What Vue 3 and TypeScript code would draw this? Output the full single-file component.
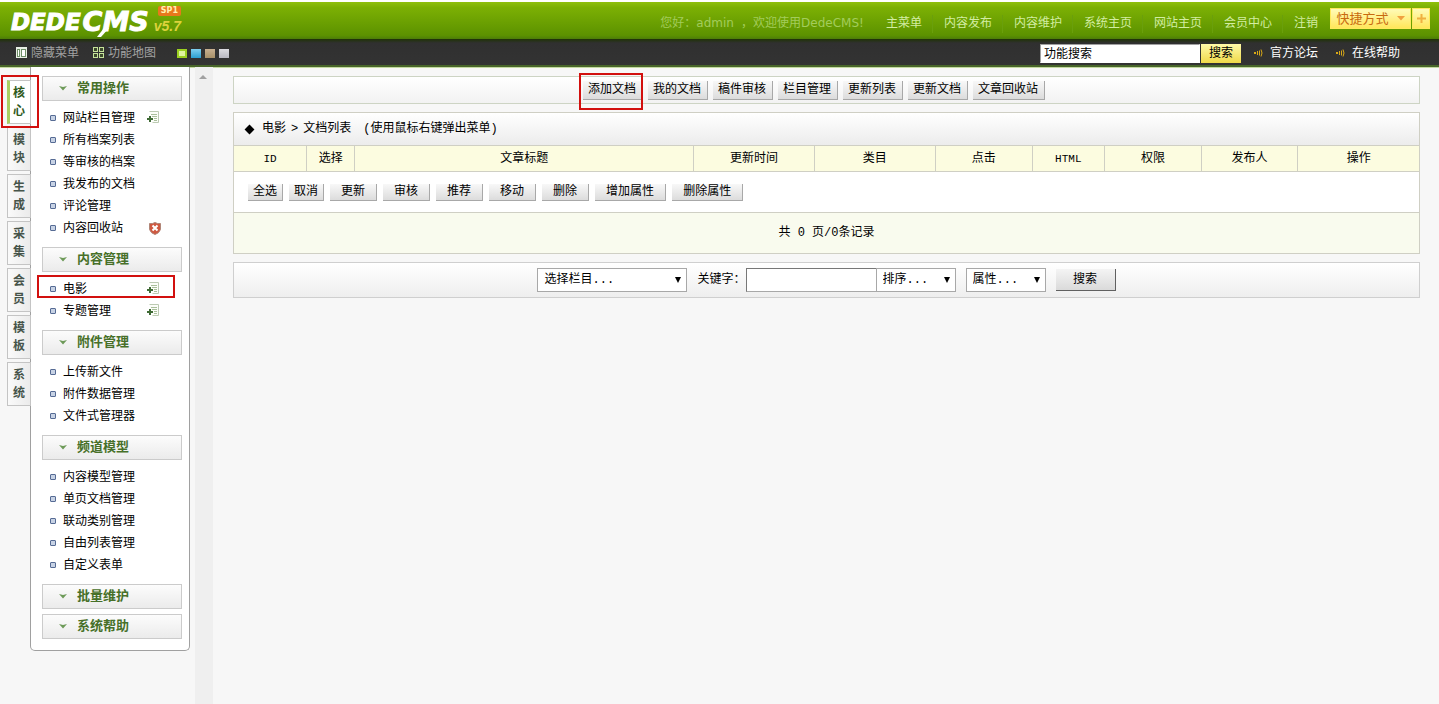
<script setup lang="ts">
import { ref } from 'vue'

interface MenuItem { text: string; icon?: 'add' | 'trash'; marked?: boolean }
interface MenuGroup { title: string; items: MenuItem[] }

const topLinks: string[] = ['主菜单', '内容发布', '内容维护', '系统主页', '网站主页', '会员中心', '注销']
const skins: string[] = ['lime', 'blue', 'tan', 'grey']
const tabs: string[] = ['核心', '模块', '生成', '采集', '会员', '模板', '系统']
const activeTab = ref('核心')

const groups: MenuGroup[] = [
  {
    title: '常用操作',
    items: [
      { text: '网站栏目管理', icon: 'add' },
      { text: '所有档案列表' },
      { text: '等审核的档案' },
      { text: '我发布的文档' },
      { text: '评论管理' },
      { text: '内容回收站', icon: 'trash' },
    ],
  },
  { title: '内容管理', items: [{ text: '电影', icon: 'add', marked: true }, { text: '专题管理', icon: 'add' }] },
  { title: '附件管理', items: [{ text: '上传新文件' }, { text: '附件数据管理' }, { text: '文件式管理器' }] },
  {
    title: '频道模型',
    items: [
      { text: '内容模型管理' },
      { text: '单页文档管理' },
      { text: '联动类别管理' },
      { text: '自由列表管理' },
      { text: '自定义表单' },
    ],
  },
  { title: '批量维护', items: [] },
  { title: '系统帮助', items: [] },
]

const tools: string[] = ['添加文档', '我的文档', '稿件审核', '栏目管理', '更新列表', '更新文档', '文章回收站']
const columns: string[] = ['ID', '选择', '文章标题', '更新时间', '类目', '点击', 'HTML', '权限', '发布人', '操作']
const actions: string[] = ['全选', '取消', '更新', '审核', '推荐', '移动', '删除', '增加属性', '删除属性']
const feature = ref('功能搜索')
const keyword = ref('')
</script>

<template>
  <div class="page">
    <header>
      <div class="green">
        <a class="logo" href="#" aria-label="DEDECMS v5.7 SP1">
          <span class="dede">DEDE</span><span class="cms">CMS</span>
          <svg class="tail" width="12" height="9" viewBox="0 0 12 9"><path d="M7 0h5L4 9H0z" fill="#fff" /></svg>
          <span class="version"><span class="sp">SP1</span><span class="num">v5.7</span></span>
        </a>
        <p class="hello">您好：<span class="verdana">admin</span> ，欢迎使用<span class="verdana">DedeCMS!</span></p>
        <nav class="top-links">
          <a v-for="l in topLinks" :key="l" href="#">{{ l }}</a>
        </nav>
        <div class="shortcut">
          <button class="short-main"><span>快捷方式</span>
            <svg width="8" height="5" viewBox="0 0 8 5"><path d="M0 0h8L4 4.5z" fill="#f0a040" /></svg>
          </button>
          <button class="short-add" aria-label="添加快捷方式">
            <svg width="9" height="9" viewBox="0 0 9 9"><path d="M3.500 0h2v3.500H9v2H5.500V9h-2V5.500H0v-2h3.500z" fill="#f0b040" /></svg>
          </button>
        </div>
      </div>
      <div class="dark">
        <a class="tool" href="#">
          <svg width="11" height="11" viewBox="0 0 11 11"><path d="M0 0h11v11H0z" fill="#e8efe4" /><path d="M1 2h3v8H1zM5 2h5v8H5z" fill="#6f8f68" /><path d="M2 3h1v6H2zM6 3h3v6H6z" fill="#fff" /></svg>
          <span>隐藏菜单</span>
        </a>
        <a class="tool map" href="#">
          <svg width="11" height="11" viewBox="0 0 11 11"><path d="M0 0h5v5H0zM6 0h5v5H6zM0 6h5v5H0zM6 6h5v5H6z" fill="#c5e29a" /><path d="M1 1h3v3H1zM7 1h3v3H7zM1 7h3v3H1zM7 7h3v3H7z" fill="#3c4a2c" /></svg>
          <span>功能地图</span>
        </a>
        <div class="skins">
          <button v-for="s in skins" :key="s" :class="['skin', s]" :aria-label="s"></button>
        </div>
        <form class="feature" @submit.prevent>
          <input v-model="feature" type="text" aria-label="功能搜索" />
          <button>搜索</button>
        </form>
        <a v-for="h in ['官方论坛', '在线帮助']" :key="h" class="help" href="#">
          <svg width="10" height="8" viewBox="0 0 10 8"><path d="M0 3h2v2H0z" fill="#d8a818" /><path d="M3.500 2v4M5.500 1.500v5M7 .5q2 3.500 0 7" fill="none" stroke="#d8a818" /></svg>
          <span>{{ h }}</span>
        </a>
      </div>
    </header>

    <div class="body">
      <nav class="tabs">
        <button v-for="t in tabs" :key="t" :class="['tab', { on: t === activeTab }]" @click="activeTab = t">{{ t }}</button>
      </nav>
      <aside class="menu">
        <section v-for="g in groups" :key="g.title" :class="{ closed: !g.items.length }">
          <h2>
            <svg width="8" height="5" viewBox="0 0 8 5"><path d="M0 0l4 1L8 0 4 4.500z" fill="#6d9a58" /></svg>
            {{ g.title }}
          </h2>
          <ul v-if="g.items.length">
            <li v-for="i in g.items" :key="i.text" :class="{ marked: i.marked }">
              <i class="dot"></i>
              <a href="#">{{ i.text }}</a>
              <svg v-if="i.icon === 'add'" class="mark" width="13" height="13" viewBox="0 0 13 13">
                <path d="M2.500 .5h9v11h-6" fill="#fbfdf8" stroke="#bccab2" />
                <path d="M4 3.500h6M5 5.500h5M7 7.500h3M7 9.500h3" stroke="#a9bf9b" />
                <path d="M0 7h2V5h2v2h2v2H4v2H2V9H0z" fill="#3f6a35" />
              </svg>
              <svg v-if="i.icon === 'trash'" class="mark trash" width="12" height="13" viewBox="0 0 12 13">
                <path d="M.5 1.500Q3.500 2 6 .5 8.500 2 11.500 1.500v6Q10 11.500 6 12.500 2 11.500 .5 7.500z" fill="#cf5840" stroke="#b18678" />
                <path d="M3.500 3.500l5 5M8.500 3.500l-5 5" stroke="#fff" stroke-width="2" />
              </svg>
            </li>
          </ul>
        </section>
      </aside>
      <div class="rail">
        <svg width="8" height="4" viewBox="0 0 8 4"><path d="M4 0l4 4H0z" fill="#a0a0a0" /></svg>
      </div>

      <main>
        <div class="bar tools">
          <button v-for="(t, n) in tools" :key="t" :class="['btn', { boxed: n === 0 }]">{{ t }}</button>
        </div>

        <section class="list">
          <h1><span class="diamond"></span>电影<span class="gt">&gt;</span>文档列表<span class="hint">(使用鼠标右键弹出菜单)</span></h1>
          <table>
            <thead>
              <tr>
                <th v-for="(c, n) in columns" :key="c" :class="'c' + n">{{ c }}</th>
              </tr>
            </thead>
            <tbody>
              <tr>
                <td colspan="10">
                  <div class="actions">
                    <button v-for="(a, n) in actions" :key="a" :class="['btn', { wide: n > 1 }]">{{ a }}</button>
                  </div>
                </td>
              </tr>
              <tr class="pager"><td colspan="10">共 0 页/0条记录</td></tr>
            </tbody>
          </table>
        </section>

        <form class="bar search" @submit.prevent>
          <span class="select cat"><select aria-label="选择栏目"><option>选择栏目...</option></select></span>
          <label for="kw">关键字：</label>
          <input id="kw" v-model="keyword" type="text" />
          <span class="select"><select aria-label="排序"><option>排序...</option></select></span>
          <span class="select attr"><select aria-label="属性"><option>属性...</option></select></span>
          <button class="go">搜索</button>
        </form>
      </main>
    </div>
  </div>
</template>

<style>
body { background: #f7f7f7; }
</style>

<style scoped>
.page {
  display: flex;
  flex-direction: column;
  min-height: 100vh;
  font: 12px/18px "Liberation Mono", "Noto Sans CJK SC", monospace;
  color: #000;
}
.page *, .page *::after { box-sizing: border-box; }
button, input, select { font: inherit; color: inherit; margin: 0; border-radius: 0; }
button { cursor: pointer; padding: 0; border: 0; white-space: nowrap; }
a { color: inherit; text-decoration: none; }
h1, h2, p, ul { margin: 0; padding: 0; font-size: 12px; font-weight: normal; list-style: none; }

header { border-top: 2px solid #fff; }
.green {
  display: flex;
  align-items: center;
  height: 37px;
  padding: 6px 9px 0 11px;
  background: linear-gradient(#8fc00c, #7cb004 15%, #5c9200 90%, #4c7d08);
}
.logo { position: relative; display: flex; align-items: center; height: 36px; margin-bottom: 4px; color: #fff; font-family: "DejaVu Sans", sans-serif; font-weight: bold; font-style: italic; -webkit-text-stroke: 1px #fff; }
.dede { font-size: 23px; line-height: 36px; }
.cms { font-size: 27px; line-height: 36px; margin-left: 2px; }
.tail { position: absolute; left: 86px; top: 24px; }
.version { display: flex; flex-direction: column; margin: 0 0 2px 5px; -webkit-text-stroke: 0; }
.sp { align-self: flex-end; padding: 0 3px; border-radius: 2px; background: #e8781c; color: #fff2b0; font: bold 8px/10px "DejaVu Sans", sans-serif; }
.num { color: #dcd23c; font: italic bold 14px/20px "Liberation Sans", sans-serif; }
.hello { margin-left: auto; color: #a3cc5c; white-space: nowrap; }
.verdana { font-family: "DejaVu Sans", sans-serif; font-size: 12px; }
.top-links { display: flex; margin-left: 11px; color: #d3eda2; white-space: nowrap; }
.top-links a { padding: 0 11px; }
.top-links a + a { box-shadow: -1px 0 #6a9f0c; }
.shortcut { display: flex; gap: 1px; margin: 0 0 10px 1px; }
.shortcut button { display: flex; align-items: center; justify-content: center; height: 21px; border: 1px solid #ffe95c; background: linear-gradient(#fffbb8, #ffe65a); color: #c86a10; }
.short-main { gap: 8px; width: 81px; }
.short-main span { padding: 2px 0 0; font-size: 13px; }
.short-add { width: 18px; }

.dark {
  display: flex;
  align-items: center;
  height: 28px;
  padding: 2px 39px 0 16px;
  border-bottom: 2px solid #48652a;
  box-shadow: 0 1px #c3d9a0;
  background: linear-gradient(#1f3305, #303030 4px, #333);
  color: #fff;
}
.tool { display: flex; align-items: center; gap: 4px; color: #a2a2a2; white-space: nowrap; }
.tool.map { margin-left: 14px; }
.tool span, .help span { padding-top: 2px; }
.tool svg { margin-bottom: 2px; }
.skins { display: flex; gap: 4px; margin-left: 21px; }
.skin { width: 10px; height: 9px; }
.lime { border: 2px solid #9bd021; background: #e0f4a0; }
.blue { background: linear-gradient(#7fd0f0, #2a9fd0); }
.tan { background: linear-gradient(#c8b090, #a89068); }
.grey { background: linear-gradient(#dcdce0, #b8b8c0); }
.feature { display: flex; gap: 1px; margin-left: auto; }
.feature input { width: 160px; height: 19px; padding: 0 3px; border: 1px solid #a0a0a0; border-right-color: #fff; border-bottom-color: #fff; background: #fff; color: #000; }
.feature button { width: 40px; height: 19px; padding-top: 2px; line-height: 17px; background: linear-gradient(#fffaa8, #f0d948); color: #000; }
.help { display: flex; align-items: center; gap: 6px; margin-left: 18px; white-space: nowrap; }
.feature + .help { margin-left: 13px; }

.body { display: flex; flex: 1; align-items: stretch; }
.tabs { position: relative; z-index: 2; display: flex; flex-direction: column; gap: 3px; width: 31px; margin-right: -1px; padding: 13px 0 0 7px; }
.tab { width: 24px; height: 44px; padding: 1px 5px 0; border: 1px solid #c4c4c4; background: linear-gradient(90deg, #fafafa, #ebebeb); color: #46544a; font-weight: bold; line-height: 18px; white-space: normal; }
.tab.on { border-left: 3px solid #a9cf62; padding: 1px 5px 0 3px; background: #fff; color: #2f5a1c; }
.tab.on::after { content: ""; position: absolute; left: 1px; top: 8px; width: 38px; height: 53px; border: 2px solid #d2100e; }
.menu { flex: none; align-self: flex-start; width: 160px; padding: 9px 7px 11px 11px; border: 1px solid #a0a0a0; border-top: 0; border-radius: 0 0 5px 5px; background: #fff; }
.menu section { margin-bottom: 8px; }
.menu section.closed { margin-bottom: 5px; }
.menu section:last-child { margin-bottom: 0; }
h2 { display: flex; align-items: center; gap: 10px; height: 25px; padding-left: 16px; border: 1px solid #cbcbcb; background: linear-gradient(#fcfcfc, #ebebeb); color: #477029; font-size: 13px; font-weight: bold; }
.menu ul { padding-top: 6px; }
.menu li { position: relative; display: flex; align-items: center; height: 22px; padding: 0 22px 0 8px; white-space: nowrap; }
.menu li a { padding-top: 2px; }
.dot { width: 6px; height: 6px; margin-right: 7px; border: 1px solid #566b94; border-radius: 1px; background: #c7d2e4; }
.mark { margin: 0 0 2px auto; }
.mark.trash { margin: 0 -1px 0 auto; }
.marked::after { content: ""; position: absolute; left: -5px; right: 7px; top: -3px; height: 23px; border: 2px solid #d2100e; }
.rail { flex: none; width: 18px; margin-left: 5px; padding: 8px 0 0 4px; background: #efefef; line-height: 0; }

main { flex: 1; min-width: 0; padding: 9px 19px 0 20px; }
.bar { display: flex; align-items: center; justify-content: center; border: 1px solid #cfcfcf; background: linear-gradient(#fff, #eee); }
.tools { gap: 5px; height: 28px; padding: 0 25px 0 0; border-color: #cdd4c4; background: linear-gradient(#fff, #f2f2f2); }
.btn { position: relative; height: 17px; padding: 0 5px; border-right: 1px solid #a8a8a8; border-bottom: 1px solid #a8a8a8; background: linear-gradient(#f8f8f8, #dcdcdc); line-height: 16px; }
.tools .btn { height: 19px; padding: 0 6px 0 5px; }
.boxed::after { content: ""; position: absolute; left: -4px; top: -8px; width: 64px; height: 37px; border: 2px solid #d2100e; }

.list { margin-top: 8px; border: 1px solid #cfcfc4; background: #fff; }
h1 { display: flex; align-items: center; height: 32px; padding-left: 12px; background: linear-gradient(#fff, #ececec); }
.diamond { width: 7px; height: 7px; margin: 0 9px 0 0; background: #000; transform: rotate(45deg); }
.gt { margin: 0 5px; }
.hint { margin-left: 12px; }
table { width: 100%; border-collapse: collapse; table-layout: fixed; }
th, td { padding: 0; border-top: 1px solid #cfcfc4; text-align: center; font-weight: normal; }
th { height: 26px; border-left: 1px solid #cfcfc4; background: #fcfce0; }
th:first-child { border-left: 0; }
.c0, .c6 { width: 6%; font-size: 11px; }
.c1 { width: 4%; }
.c2 { width: 28%; }
.c3, .c4, .c9 { width: 10%; }
.c5, .c7, .c8 { width: 8%; }
.actions { display: flex; gap: 6px; height: 40px; padding: 0 14px; align-items: center; }
.actions .wide { padding: 0 11px; }
.pager td { height: 40px; background: #f9fbee; }

.search { height: 36px; margin-top: 8px; }
.select { position: relative; width: 80px; height: 24px; }
.cat { width: 150px; }
.attr { margin: 0 10px; }
.select::after { content: ""; position: absolute; right: 6px; top: 9px; border: 3px solid transparent; border-top: 6px solid #000; border-bottom: 0; pointer-events: none; }
select { width: 100%; height: 24px; padding: 0 6px; border: 1px solid #a8a8a8; background: #fff; appearance: none; }
.search label { margin-left: 10px; white-space: nowrap; }
.search input { width: 131px; height: 24px; padding: 0 4px; border: 1px solid #a8a8a8; border-top-color: #777; border-left-color: #777; background: #fff; }
.search input + .select { margin-left: -1px; }
.go { width: 60px; height: 22px; padding-top: 1px; border-right: 1px solid #606060; border-bottom: 1px solid #606060; background: linear-gradient(#f4f4f4, #dadada); }
</style>
